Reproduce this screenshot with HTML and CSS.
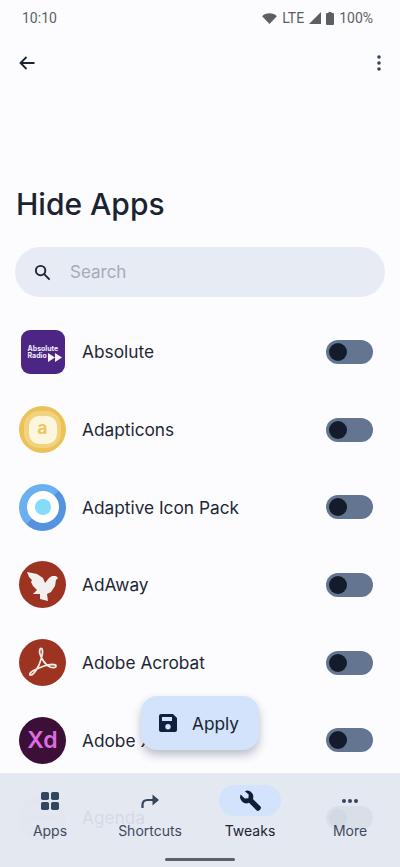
FILE: index.html
```html
<!DOCTYPE html>
<html lang="en">
<head>
<meta charset="utf-8">
<title>Hide Apps</title>
<link rel="stylesheet" href="styles.css">
</head>
<body>
<div class="screen">
  <div class="status">
    <span class="time">10:10</span>
    <div class="status-right">
      <svg class="wifi" viewBox="0 0 16 12"><path d="M0 3.600C2 1.400 5 .4 8 .4s6 1 8 3.200L8 12z"/></svg>
      <span>LTE</span>
      <svg class="signal" viewBox="0 0 12 12"><path d="M12 0v12H0z"/></svg>
      <svg class="battery" viewBox="0 0 8 13"><path d="M2.500 0h3v1H7a1 1 0 0 1 1 1v10a1 1 0 0 1-1 1H1a1 1 0 0 1-1-1V2a1 1 0 0 1 1-1h1.500z"/></svg>
      <span>100%</span>
    </div>
  </div>
  <div class="toolbar">
    <svg class="back" viewBox="0 0 16 14"><path d="M15.500 7H1.500M7.500 1l-6 6 6 6"/></svg>
    <svg class="menu" viewBox="0 0 4 16"><circle cx="2" cy="2" r="1.800"/><circle cx="2" cy="8" r="1.800"/><circle cx="2" cy="14" r="1.800"/></svg>
  </div>
  <h1 class="title">Hide Apps</h1>
  <div class="search">
    <svg class="search-icon" viewBox="0 0 18 18"><circle cx="7" cy="7" r="5"/><path d="M10.800 10.800 16.500 16.500"/></svg>
    <span>Search</span>
  </div>
  <ul class="list">
    <li class="row">
      <div class="icon absolute-radio"><span class="ar-text">Absolute<br>Radio</span><svg class="ar-play" viewBox="0 0 14 9"><path d="M0 0l7 4.500L0 9zM7 0l7 4.500L7 9z"/></svg></div>
      <span class="name">Absolute</span><span class="switch"></span>
    </li>
    <li class="row">
      <div class="icon adapticons"><div class="ad-mid"><div class="ad-in">a</div></div></div>
      <span class="name">Adapticons</span><span class="switch"></span>
    </li>
    <li class="row">
      <div class="icon adaptive"><div class="ap-white"><div class="ap-dot"></div></div></div>
      <span class="name">Adaptive Icon Pack</span><span class="switch"></span>
    </li>
    <li class="row">
      <div class="icon red"><svg class="glyph" viewBox="0 0 47 47"><path fill="#f2f0ee" d="M8 11 18 13 24 17 26 22 30 17 33 15 37 15 39 17 37 19 36 25 32 31 28 33 29 40 25 39 21 38 21 33 14 33 18 29 14 25 12 21 13 19 10 16z"/></svg></div>
      <span class="name">AdAway</span><span class="switch"></span>
    </li>
    <li class="row">
      <div class="icon red"><svg class="glyph" viewBox="0 0 47 47"><path fill="none" stroke="#f2ece6" stroke-width="1.800" stroke-linejoin="round" d="M11 36c3 1 6-4 9-10 2-5 5-13 3-16-2-2-3 2-2 5 2 6 6 11 10 13 3 1 6 1 6-1s-6-2-12 0c-5 2-16 6-14 9z"/></svg></div>
      <span class="name">Adobe Acrobat</span><span class="switch"></span>
    </li>
    <li class="row">
      <div class="icon xd"><span>Xd</span></div>
      <span class="name">Adobe XD</span><span class="switch"></span>
    </li>
    <li class="row">
      <div class="icon agenda"><div class="ag-line"></div><div class="ag-line"></div></div>
      <span class="name">Agenda</span><span class="switch"></span>
    </li>
  </ul>
  <button class="fab">
    <svg class="save" viewBox="0 0 18 18"><path fill-rule="evenodd" d="M2 0h12l4 4v12a2 2 0 0 1-2 2H2a2 2 0 0 1-2-2V2a2 2 0 0 1 2-2zm1 3v4h10V3zm6 7a2.700 2.700 0 1 0 0 5.400A2.700 2.700 0 0 0 9 10z"/></svg>
    <span>Apply</span>
  </button>
  <nav class="nav">
    <div class="nav-item">
      <div class="nav-pill"><svg class="nav-icon" viewBox="0 0 18 18"><rect width="8" height="8" rx="1.800"/><rect x="10" width="8" height="8" rx="1.800"/><rect y="10" width="8" height="8" rx="1.800"/><rect x="10" y="10" width="8" height="8" rx="1.800"/></svg></div>
      <span>Apps</span>
    </div>
    <div class="nav-item">
      <div class="nav-pill"><svg class="nav-icon" viewBox="0 0 18 18"><path fill="none" stroke="#34455f" stroke-width="2.200" d="M1.500 16v-3c0-3 2-5 5-5h9"/><path d="M11.500 2.500 18 8l-6.500 5.500z"/></svg></div>
      <span>Shortcuts</span>
    </div>
    <div class="nav-item active">
      <div class="nav-pill"><svg class="nav-icon" viewBox="0 0 20 20"><path d="M7.500.5a6 6 0 0 1 4.800 8l7 7c.9.9.9 2 .1 2.900l-.9.9c-.9.8-2 .8-2.900-.1l-7-7A6 6 0 0 1 .6 4.400L4.500 8.200 8 7.800 8.300 4.200 4.600 1.200A6 6 0 0 1 7.500.5z"/></svg></div>
      <span>Tweaks</span>
    </div>
    <div class="nav-item">
      <div class="nav-pill"><svg class="nav-icon" viewBox="0 0 18 18"><circle cx="3" cy="9" r="2"/><circle cx="9" cy="9" r="2"/><circle cx="15" cy="9" r="2"/></svg></div>
      <span>More</span>
    </div>
    <div class="handle"></div>
  </nav>
</div>
</body>
</html>
```
FILE: styles.css
```css
* { box-sizing: border-box; }
html, body { margin: 0; padding: 0; }
body { font-family: Inter, "Noto Sans", sans-serif; background: #fcfcff; color: #1a2330; }
.screen { position: relative; width: 400px; height: 867px; overflow: hidden; background: #fcfcff; }

.status { height: 36px; padding: 0 27px 0 22px; display: flex; align-items: center; justify-content: space-between; font-family: Roboto, sans-serif; font-size: 14px; color: #5c5f62; }
.status-right { display: flex; align-items: center; gap: 5px; }
.status svg { fill: #5c5f62; display: block; }
.wifi { width: 15px; height: 11px; }
.signal { width: 12px; height: 12px; }
.battery { width: 8px; height: 13px; }

.toolbar { height: 54px; padding: 0 19px; display: flex; align-items: center; justify-content: space-between; }
.back { width: 16px; height: 14px; fill: none; stroke: #1a2330; stroke-width: 1.800; }
.menu { width: 4px; height: 16px; fill: #33435c; }

.title { margin: 84px 0 0; padding: 0 16px; height: 60px; font-weight: 500; font-size: 30px; line-height: 60px; color: #1a2330; }

.search { margin: 13px 15px 0; height: 50px; border-radius: 25px; background: #e6ebf4; display: flex; align-items: center; padding-left: 19px; gap: 19px; color: #a3abb8; font-size: 17px; }
.search-icon { width: 17px; height: 17px; fill: none; stroke: #1a2330; stroke-width: 2; }

.list { list-style: none; margin: 16px 0 0; padding: 0; }
.row { height: 77.700px; display: flex; align-items: center; padding: 0 27px 0 19px; }
.name { flex: 1; margin-left: 16px; font-size: 17.300px; color: #1d2733; }
.icon { width: 47px; height: 47px; border-radius: 50%; flex: none; display: flex; align-items: center; justify-content: center; }
.switch { position: relative; width: 47px; height: 24px; border-radius: 12px; background: #637590; flex: none; }
.switch::before { content: ""; position: absolute; left: 3px; top: 3px; width: 18px; height: 18px; border-radius: 50%; background: #141c2b; }

.absolute-radio { position: relative; width: 44px; height: 44px; margin: 0 1.500px; border-radius: 9px; background: #4d2585; display: block; }
.ar-text { position: absolute; left: 7px; top: 15px; font-size: 7px; line-height: 7.500px; font-weight: 700; color: #f2eef8; }
.ar-play { position: absolute; left: 27px; top: 23px; width: 14px; height: 9px; fill: #f7f5fb; }

.adapticons { background: #ecc257; }
.ad-mid { width: 37px; height: 37px; border-radius: 15px; background: #f1d37f; display: flex; align-items: center; justify-content: center; }
.ad-in { width: 28px; height: 28px; border-radius: 10px; background: #fdf6de; display: flex; align-items: center; justify-content: center; color: #eec558; font-size: 17px; font-weight: 700; line-height: 1; padding-bottom: 2px; }

.adaptive { background: linear-gradient(135deg, #6aaff0 50%, #5592e0 50%); }
.ap-white { width: 32px; height: 32px; border-radius: 50%; background: #fff; display: flex; align-items: center; justify-content: center; }
.ap-dot { width: 16px; height: 16px; border-radius: 50%; background: #84dcfa; }

.red { background: #9c3421; }
.glyph { width: 47px; height: 47px; display: block; }

.xd { background: #3c0f38; color: #dd6ddf; font-size: 23px; font-weight: 600; }
.agenda { background: #d8dde4; flex-direction: column; gap: 6px; }
.ag-line { width: 36px; height: 10px; background: #e8ecf1; }

.fab { position: absolute; left: 141px; top: 696px; width: 118px; height: 54px; border: 0; border-radius: 16px; background: #d2e3fb; box-shadow: 0 5px 10px rgba(40, 50, 70, 0.3); display: flex; align-items: center; gap: 15px; padding: 0 0 0 18px; color: #1a2330; font-family: inherit; font-size: 17.300px; }
.save { width: 18px; height: 18px; fill: #10213f; }

.nav { position: absolute; left: 0; right: 0; top: 773px; bottom: 0; background: rgba(226, 231, 240, 0.93); display: grid; grid-template-columns: 100px 100px 100px 100px; padding-top: 12px; }
.nav-item { display: flex; flex-direction: column; align-items: center; font-size: 14px; color: #3d4a5e; }
.nav-pill { width: 62px; height: 31px; border-radius: 16px; display: flex; align-items: center; justify-content: center; }
.nav-icon { width: 18px; height: 18px; fill: #34455f; }
.nav-item span { margin-top: 6px; line-height: 17px; }
.active { color: #1a2330; }
.active .nav-pill { background: #d2e3fb; }
.active .nav-icon { width: 21px; height: 21px; fill: #0f1d36; }
.handle { position: absolute; left: 165px; bottom: 6px; width: 70px; height: 3px; border-radius: 2px; background: #5d6068; }
```
